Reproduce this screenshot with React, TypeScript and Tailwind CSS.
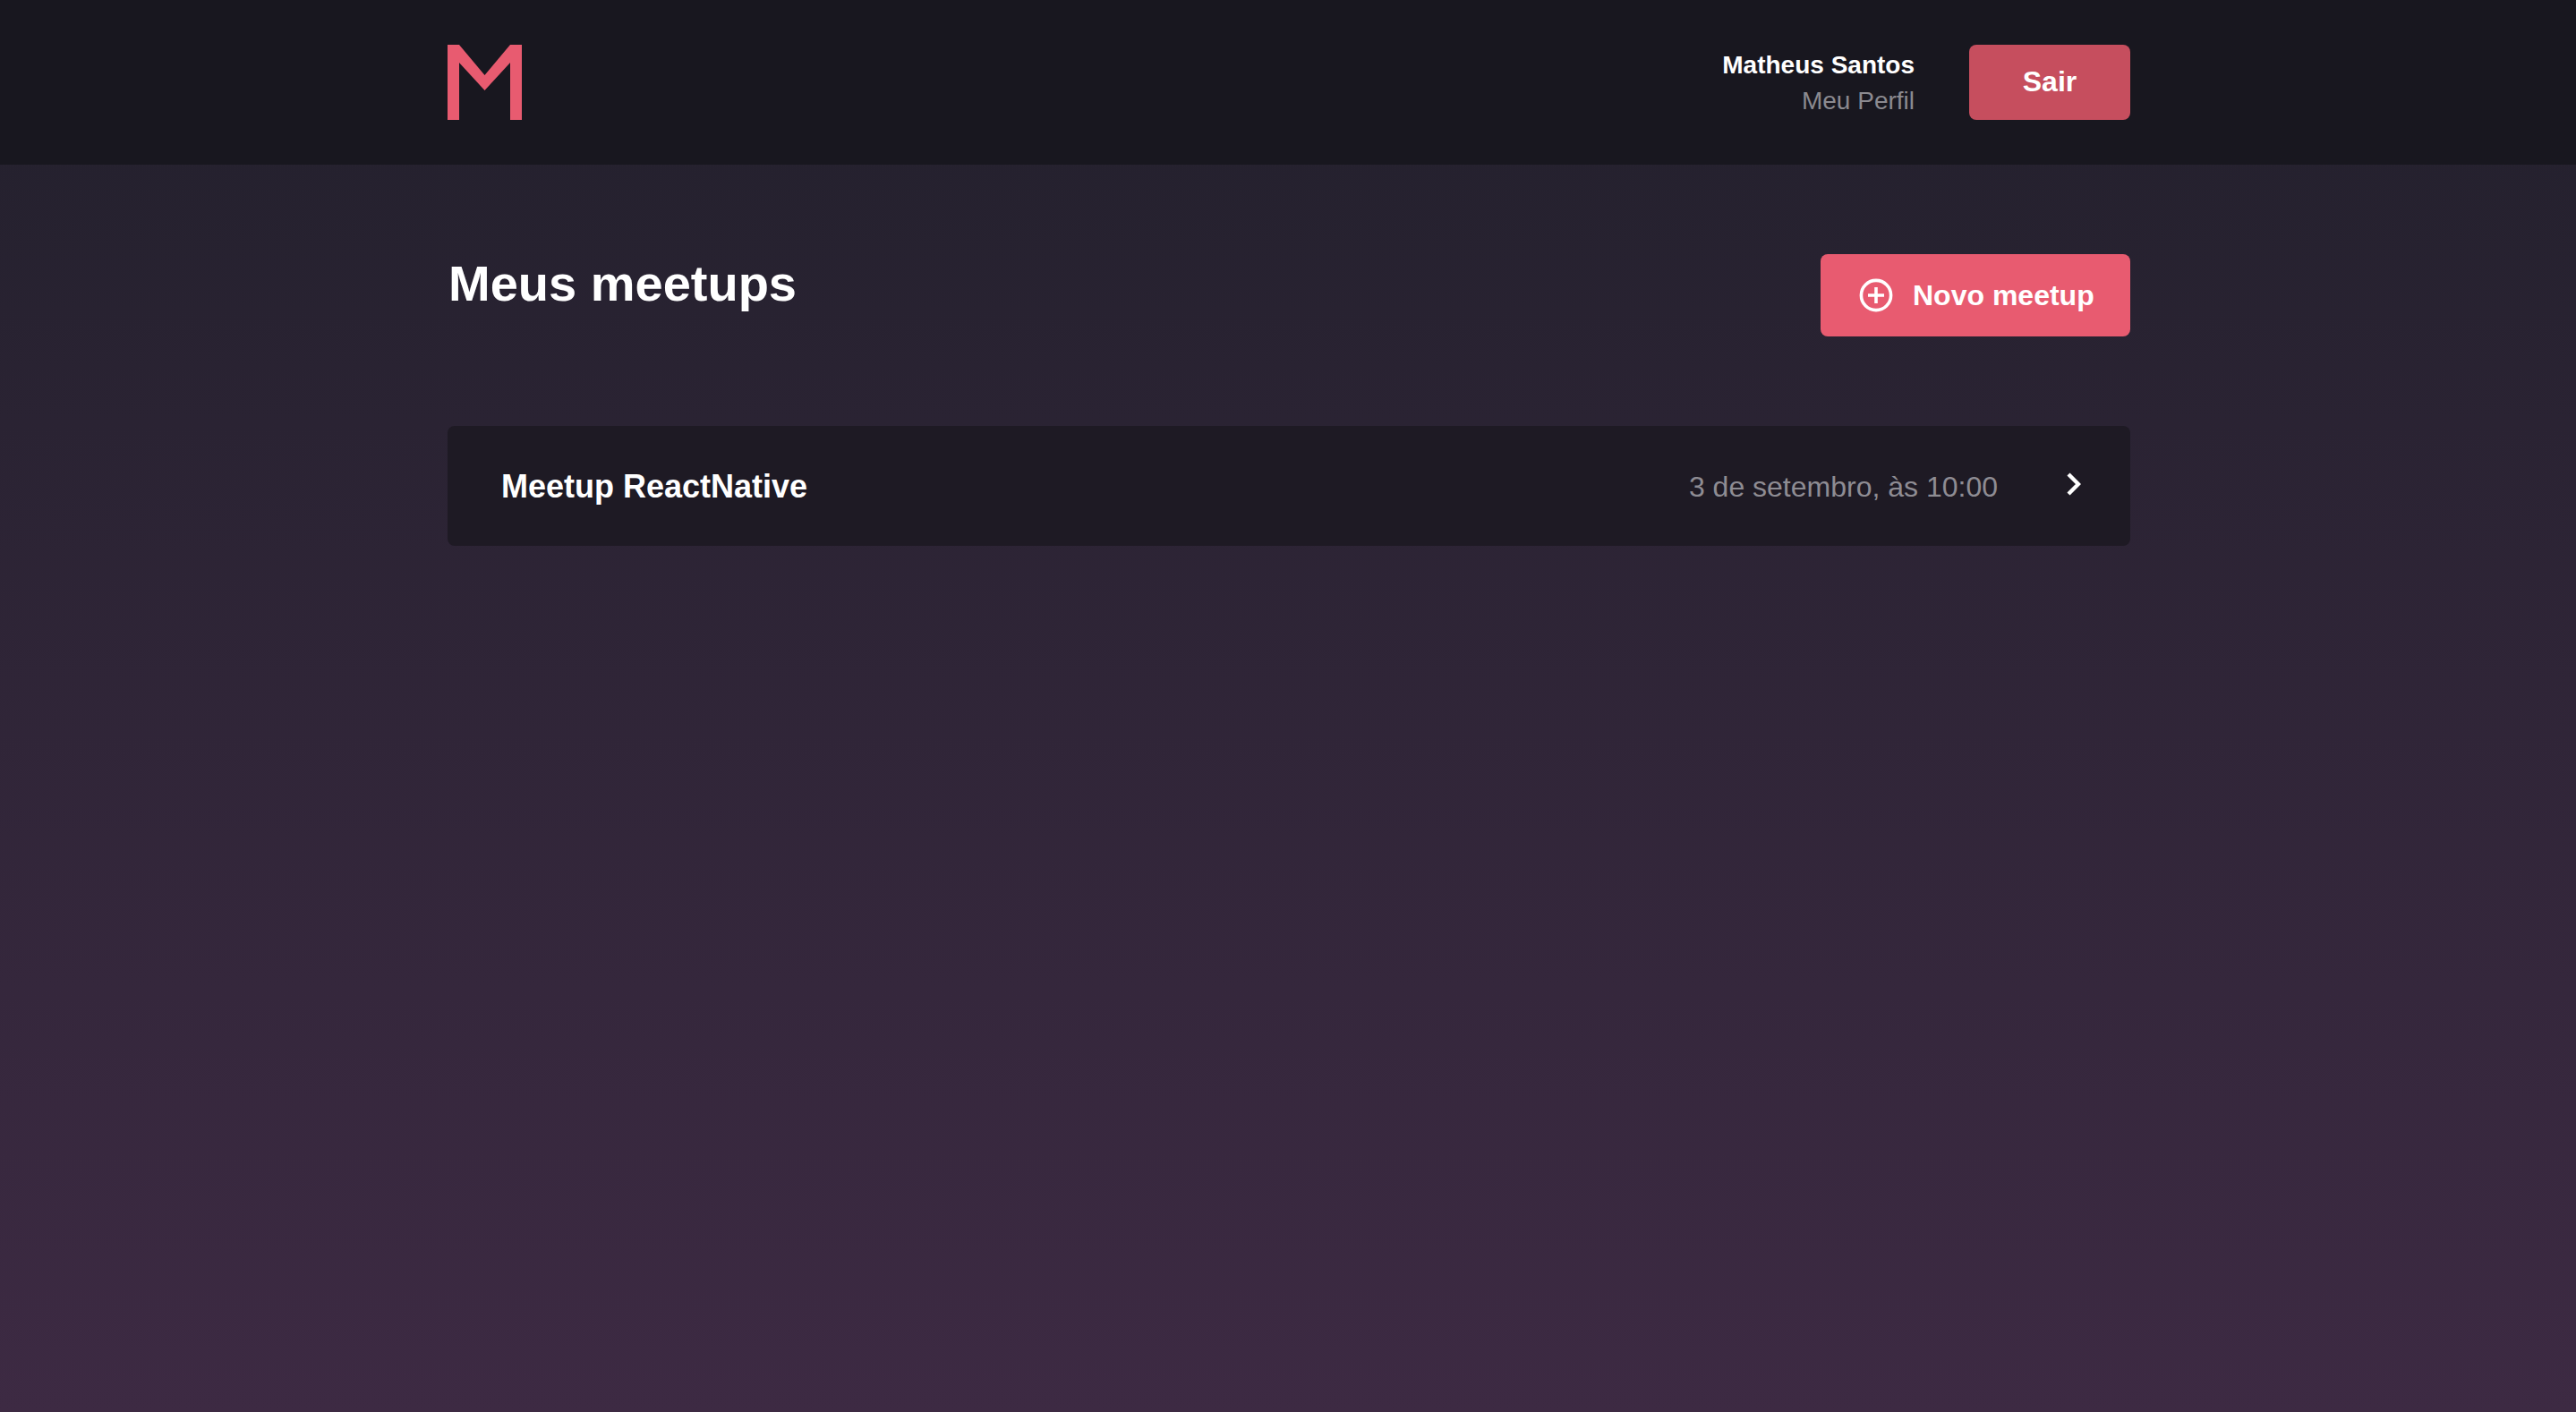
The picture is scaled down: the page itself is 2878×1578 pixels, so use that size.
import React from "react";

const font = { fontFamily: '"Liberation Sans", Arial, sans-serif' };

const Logo = () => (
  <svg width="84" height="84" viewBox="0 0 84 84" className="block">
    <path d="M0 0H13L41.5 34L70 0H83V84H70V20L41.5 51L13 20V84H0Z" fill="#e85b70" />
  </svg>
);

const PlusCircle = () => (
  <svg width="38" height="38" viewBox="0 0 38 38" fill="none" stroke="white" strokeWidth="3.6" className="shrink-0">
    <circle cx="19" cy="19" r="16.6" />
    <path d="M19 10V28M10 19H28" />
  </svg>
);

const Chevron = () => (
  <svg width="16" height="26" viewBox="0 0 16 26" fill="none" stroke="white" strokeWidth="4.4" className="shrink-0 mb-[5px]">
    <path d="M2 2L13 13L2 24" />
  </svg>
);

export default function App() {
  return (
    <div style={font} className="min-h-screen h-[1578px] bg-linear-to-b/srgb from-[#22202c] to-[#3d2a43] text-white">
      {/* Header */}
      <header className="h-[184px] bg-[#18171f]">
        <div className="ml-[500px] w-[1880px] h-full flex items-center justify-between">
          <Logo />
          <div className="flex items-center">
            <div className="text-right mr-[61px] pt-[2px]">
              <div className="font-bold text-[28px] leading-[40px]">Matheus Santos</div>
              <div className="text-[28px] leading-[40px] text-[#8b8a90]">Meu Perfil</div>
            </div>
            <button className="w-[180px] h-[84px] rounded-lg bg-[#c64e5e] font-bold text-[32px] pb-[3px]">Sair</button>
          </div>
        </div>
      </header>

      <main className="ml-[500px] w-[1880px] pt-[100px]">
        <div className="flex items-start justify-between">
          <h1 className="font-bold text-[56px] leading-[64px] pl-[1px] pt-[1px]">Meus meetups</h1>
          <button className="w-[346px] h-[92px] rounded-lg bg-[#e85b70] flex items-center pl-[43px] gap-[22px] font-bold text-[32px]">
            <PlusCircle />
            <span>Novo meetup</span>
          </button>
        </div>

        {/* Meetup list */}
        <div className="mt-[100px] h-[134px] rounded-lg bg-[#1e1a24] flex items-center justify-between pl-[60px] pr-[55px]">
          <strong className="font-bold text-[36px] pt-[2px]">Meetup ReactNative</strong>
          <div className="flex items-center gap-[77px]">
            <span className="text-[32px] text-[#8e8c93] pt-[1px]">3 de setembro, às 10:00</span>
            <Chevron />
          </div>
        </div>
      </main>
    </div>
  );
}
